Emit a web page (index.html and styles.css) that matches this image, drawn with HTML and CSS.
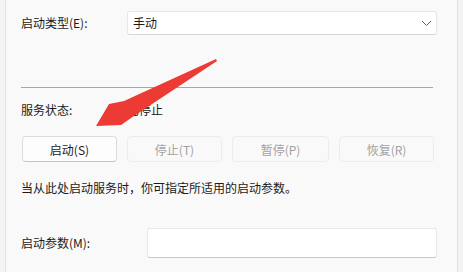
FILE: index.html
```html
<!DOCTYPE html>
<html lang="zh-CN">
<head>
<meta charset="utf-8">
<link rel="stylesheet" href="styles.css">
</head>
<body>
<div class="panel">
  <div class="row row-type">
    <span class="label label-type">启动类型(E):</span>
    <div class="select">
      <span>手动</span>
      <svg class="chev" width="11" height="7" viewBox="0 0 11 7"><polyline points="1,1 5.5,5.5 10,1" fill="none" stroke="#5f5f5f" stroke-width="1"/></svg>
    </div>
  </div>
  <div class="sep"></div>
  <div class="row row-status">
    <span class="label label-type">服务状态:</span>
    <span>已停止</span>
  </div>
  <div class="buttons">
    <button class="btn">启动(S)</button>
    <button class="btn disabled">停止(T)</button>
    <button class="btn disabled wide">暂停(P)</button>
    <button class="btn disabled">恢复(R)</button>
  </div>
  <p class="desc">当从此处启动服务时，你可指定所适用的启动参数。</p>
  <div class="row row-param">
    <span class="label label-param">启动参数(M):</span>
    <div class="input"></div>
  </div>
</div>
<svg class="arrow" width="463" height="272" viewBox="0 0 463 272">
  <polygon points="96,126 109,104 124,101 216,59 217,61 134,116 121,125" fill="#ec3a35"/>
</svg>
</body>
</html>
```
FILE: styles.css
```css
html, body {
  margin: 0;
  padding: 0;
}
body {
  width: 463px;
  height: 272px;
  background: #f3f3f3;
  font-family: "Noto Sans CJK SC", "Noto Sans", sans-serif;
  font-size: 12px;
  line-height: 16px;
  color: #1b1b1b;
  position: relative;
  overflow: hidden;
}
.panel {
  margin-left: 5px;
  width: 453px;
  height: 272px;
  border-left: 1px solid #e3e3e3;
  border-right: 1px solid #e3e3e3;
  background: #f9f9f9;
  padding: 11px 0 0 15px;
  box-sizing: border-box;
}
.row {
  display: flex;
  align-items: center;
}
.row-type {
  height: 24px;
}
.label-type {
  width: 106px;
}
.label-param {
  width: 126px;
}
.select {
  width: 310px;
  height: 24px;
  box-sizing: border-box;
  background: #ffffff;
  border: 1px solid #e6e6e6;
  border-bottom-color: #d6d6d6;
  border-radius: 3px;
  display: flex;
  align-items: center;
  justify-content: space-between;
  padding: 0 3px 0 5px;
}
.chev {
  margin-right: 1px;
}
.sep {
  margin-top: 52px;
  width: 412px;
  height: 1px;
  background: #a6a6a6;
}
.row-status {
  margin-top: 14px;
  height: 16px;
}
.buttons {
  margin-top: 18px;
  margin-left: 1px;
  display: flex;
  gap: 10px;
}
.btn {
  width: 95px;
  height: 26px;
  box-sizing: border-box;
  font-family: inherit;
  font-size: 12px;
  color: #1b1b1b;
  background: #fdfdfd;
  border: 1px solid #dcdcdc;
  border-bottom-color: #c4c4c4;
  border-radius: 4px;
  padding: 0;
}
.btn.wide {
  width: 97px;
}
.btn.disabled {
  color: #a2a2a2;
  background: #f9f9f9;
  border-color: #ececec;
}
.desc {
  margin: 18px 0 0 0;
  height: 16px;
}
.row-param {
  margin-top: 32px;
  height: 30px;
}
.input {
  width: 290px;
  height: 30px;
  box-sizing: border-box;
  background: #ffffff;
  border: 1px solid #e8e8e8;
  border-bottom-color: #c8c8c8;
  border-radius: 3px;
}
.arrow {
  position: absolute;
  left: 0;
  top: 0;
  pointer-events: none;
}
```
